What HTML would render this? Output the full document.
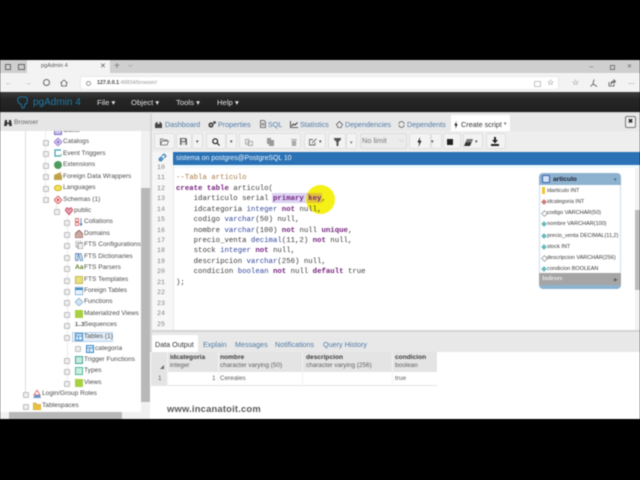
<!DOCTYPE html>
<html><head><meta charset="utf-8"><style>
html,body{margin:0;padding:0;background:#000;width:640px;height:480px;overflow:hidden}
#p{position:absolute;left:0;top:0;width:640px;height:480px;overflow:hidden;font-family:"Liberation Sans",sans-serif;filter:blur(.4px)}
#p div,#p svg{position:absolute;white-space:pre}
.t{font-size:6.55px;color:#4c4c4c;line-height:10px;letter-spacing:.02px}
.l{font-size:7.2px;color:#4f7ba6;line-height:10px}
.n{font-size:7.7px;color:#e2e2e2;line-height:10px}
.c{font-family:"Liberation Mono",monospace;font-size:7.35px;line-height:10px;color:#3c3c3c;left:176px}
.g{font-family:"Liberation Mono",monospace;font-size:6.6px;line-height:10px;color:#808080;left:157px}
.c b{font-weight:bold;color:#76247f}.c i{font-style:normal;color:#32479c}
.b{background:#f3f3f3;border:1px solid #e0e0e0;border-radius:2px;box-sizing:border-box;height:16px;top:133px}
.e{font-size:5.5px;color:#3a3a3a;line-height:8px;left:547px}
.h{font-size:6.6px;color:#3c3c3c;line-height:8px;font-weight:bold}
.s{font-size:6.4px;color:#606060;line-height:8px}
.x{width:4px;height:4px;border:1px solid #bcbcbc;background:#efefef;border-radius:1px;margin:0 0 0 -1px}
.ic{width:8px;height:8px}
.q{color:#444;font-size:5px;line-height:6px}
</style></head><body><div id="p">
<div style="left:0;top:60px;width:640px;height:13px;background:#cfcfcf"></div>
<div style="left:27px;top:60px;width:83px;height:13px;background:#f3f3f3"></div>
<div style="left:5px;top:64px;width:4px;height:4px;border:1px solid #666"></div>
<div style="left:18px;top:64px;width:5px;height:4px;border:1px solid #666"></div>
<div style="left:41px;top:63px;font-size:5.6px;line-height:7px;color:#555">pgAdmin 4</div>
<div style="left:100px;top:62px;font-size:7px;line-height:9px;color:#555">✕</div>
<div style="left:114px;top:61px;font-size:10px;line-height:11px;color:#777">+</div>
<div style="left:128px;top:63px;font-size:6px;line-height:7px;color:#777">⌵</div>
<div style="left:589px;top:61px;font-size:8px;line-height:11px;color:#777">–</div>
<div style="left:610px;top:65px;width:3px;height:3px;border:1px solid #777"></div>
<div style="left:627px;top:63px;font-size:6px;line-height:8px;color:#666">✕</div>
<div style="left:0;top:73px;width:640px;height:19px;background:#f3f3f3"></div>
<div style="left:5px;top:78px;font-size:8px;line-height:10px;color:#b5b5b5">←</div>
<div style="left:24px;top:78px;font-size:8px;line-height:10px;color:#b5b5b5">→</div>
<div style="left:43px;top:79px;width:5px;height:5px;border:1px solid #666;border-radius:50%"></div>
<svg style="left:60px;top:79px" width="8" height="8" viewBox="0 0 8 8" fill="none" stroke="#555" stroke-width=".8"><path d="M.5 4L4 1l3.5 3M1.5 3.5V7h5V3.500"/></svg>
<div style="left:80px;top:76px;width:479px;height:14px;background:#fff;border:1px solid #e8e8e8;box-sizing:border-box"></div>
<div style="left:86px;top:81px;width:3px;height:3px;border:1px solid #999;border-radius:50%"></div>
<div style="left:97px;top:80px;font-size:5.3px;line-height:7px;color:#999"><span style="color:#444;font-weight:bold">127.0.0.1</span>:49834/browser/</div>
<div style="left:534px;top:81px;width:5px;height:4px;border:1px solid #c4c4c4"></div>
<div style="left:547px;top:78px;font-size:8px;line-height:10px;color:#444">☆</div>
<div style="left:572px;top:78px;font-size:8px;line-height:10px;color:#555">☆</div>
<svg style="left:590px;top:79px" width="8" height="8" viewBox="0 0 8 8" fill="none" stroke="#555" stroke-width=".8"><path d="M4 .5L3 5 .5 7.500M3 5l4 2.500"/></svg>
<svg style="left:608px;top:79px" width="8" height="8" viewBox="0 0 8 8" fill="none" stroke="#555" stroke-width=".8"><path d="M1 3v4h5V5M3 5c0-2 1-3 3-3V.8L7.500 2.500 6 4V3C5 3 4 3.500 3 5Z"/></svg>
<div style="left:628px;top:78px;font-size:7px;line-height:9px;color:#555">…</div>
<div style="left:0;top:92px;width:640px;height:20px;background:linear-gradient(#3c3c3c,#262626 35%,#1f1f1f)"></div>
<svg style="left:16px;top:96px" width="13" height="13" viewBox="0 0 13 13" fill="none" stroke="#1f6f98" stroke-width="1.100"><path d="M2 2C4 .5 9 .5 11 2C12 5 11 8 9 8L8 12H6L5 8C3 8 1 5 2 2Z"/></svg>
<div style="left:33px;top:96px;font-size:10px;line-height:13px;color:#1f7ba8">pgAdmin 4</div>
<div class="n" style="left:97px;top:98px">File ▾</div>
<div class="n" style="left:131px;top:98px">Object ▾</div>
<div class="n" style="left:176px;top:98px">Tools ▾</div>
<div class="n" style="left:217px;top:98px">Help ▾</div>
<div style="left:0;top:112px;width:640px;height:307px;background:#e8e8e8"></div>
<div style="left:0;top:112px;width:640px;height:1px;background:#cfcfcf"></div>
<div style="left:0;top:131px;width:141px;height:281px;background:#fff"></div>
<div style="left:141px;top:131px;width:9px;height:281px;background:#f1f1f1"></div>
<div style="left:141px;top:188px;width:9px;height:214px;background:#b8b8b8"></div>
<div style="left:0;top:412px;width:150px;height:7px;background:#f1f1f1"></div>
<div style="left:9px;top:412px;width:113px;height:7px;background:#b8b8b8"></div>
<div style="left:150px;top:112px;width:2px;height:307px;background:#d8d8d8"></div>
<div style="left:25px;top:131px;width:1px;height:266px;background:#dfdfdf"></div>
<div style="left:45px;top:131px;width:1px;height:66px;background:#ececec"></div>
<div style="left:56px;top:205px;width:1px;height:5px;background:#e4e4e4"></div>
<div style="left:67px;top:216px;width:1px;height:165px;background:#ececec"></div>

<div class="x" style="left:44px;top:140px"></div><div class="x" style="left:44px;top:151px"></div><div class="x" style="left:44px;top:163px"></div><div class="x" style="left:44px;top:174px"></div><div class="x" style="left:44px;top:186px"></div><div class="x" style="left:44px;top:197px"></div>
<div class="x" style="left:55px;top:209px"></div>
<div class="x" style="left:65px;top:220px"></div><div class="x" style="left:65px;top:232px"></div><div class="x" style="left:65px;top:243px"></div><div class="x" style="left:65px;top:255px"></div><div class="x" style="left:65px;top:266px"></div><div class="x" style="left:65px;top:278px"></div><div class="x" style="left:65px;top:289px"></div><div class="x" style="left:65px;top:300px"></div><div class="x" style="left:65px;top:312px"></div><div class="x" style="left:65px;top:323px"></div><div class="x" style="left:65px;top:335px"></div><div class="x" style="left:76px;top:346px"></div><div class="x" style="left:65px;top:358px"></div><div class="x" style="left:65px;top:369px"></div><div class="x" style="left:65px;top:381px"></div>
<div class="x" style="left:24px;top:392px"></div><div class="x" style="left:24px;top:404px"></div>

<div class="ic" style="left:54px;top:127px;background:#c9c4ea;border:1px solid #7a6fc0;box-sizing:border-box"></div>
<svg class="ic" style="left:54px;top:138px" viewBox="0 0 8 8"><path d="M4 0L8 4 4 8 0 4Z" fill="#dcd2f3" stroke="#8a6fc9" stroke-width=".8"/><circle cx="4" cy="4" r="1.300" fill="#8a6fc9"/></svg>
<svg class="ic" style="left:54px;top:149px" viewBox="0 0 8 8" fill="none"><path d="M7 1H1V7H7" stroke="#3aa0b0" stroke-width="1.200"/><path d="M5 7.500L8 5" stroke="#7b8" stroke-width="1"/></svg>
<div class="ic" style="left:54px;top:161px;background:#4f9a5f;border-radius:50%"></div>
<svg class="ic" style="left:54px;top:172px" viewBox="0 0 8 8"><path d="M0 3L7 0V3H8V8H0Z" fill="#bfa24a"/></svg>
<div style="left:54px;top:185px;width:8px;height:6px;background:#f3e35a;border:.6px solid #c9b020;box-sizing:border-box;border-radius:3px"></div>
<svg class="ic" style="left:54px;top:196px" viewBox="0 0 8 8"><path d="M4 0L8 4 4 8 0 4Z" fill="#f6dcd8" stroke="#c44" stroke-width=".8"/><circle cx="4" cy="4" r="1.200" fill="#c44"/></svg>
<svg class="ic" style="left:65px;top:207px" viewBox="0 0 8 8"><path d="M4 8L0 3 2 .5 4 2 6 .5 8 3Z" fill="#e39aaa" stroke="#b23" stroke-width=".6"/></svg>
<svg class="ic" style="left:75px;top:218px" viewBox="0 0 8 8" fill="none"><rect x=".5" y=".5" width="3" height="3" stroke="#c55" stroke-width=".8"/><rect x=".5" y="4.500" width="3" height="3" stroke="#c55" stroke-width=".8"/><path d="M6 0V7M4.800 5.500L6 7.500 7.200 5.500" stroke="#57a" stroke-width=".8"/></svg>
<svg class="ic" style="left:75px;top:230px" viewBox="0 0 8 8"><path d="M4 0L8 4V8H0V4Z" fill="#c9a9a0" stroke="#844" stroke-width=".7"/></svg>
<svg class="ic" style="left:75px;top:241px" viewBox="0 0 8 8"><rect x="1" y="0" width="5" height="6" fill="#f5f5f5" stroke="#999" stroke-width=".7"/><rect x="3" y="2" width="5" height="6" fill="#eee" stroke="#777" stroke-width=".7"/></svg>
<svg class="ic" style="left:75px;top:253px" viewBox="0 0 8 8"><path d="M.5 .5H3V7.500H.5ZM3.500 1L6 .5 8 7.500 5.500 8Z" fill="#d5e5f5" stroke="#47a" stroke-width=".7"/></svg>
<div style="left:75px;top:263px;font-size:6.6px;line-height:10px;color:#5a7a20;font-weight:bold">Aa</div>
<div class="ic" style="left:75px;top:276px;background:#e8e080;border:.6px solid #c4bb50;box-sizing:border-box"></div>
<svg class="ic" style="left:75px;top:287px" viewBox="0 0 8 8"><rect width="8" height="8" fill="#e6f1fa" stroke="#3c87c0"/><path d="M0 2H8" stroke="#3c87c0" stroke-width="2"/></svg>
<svg class="ic" style="left:75px;top:298px" viewBox="0 0 8 8"><path d="M4 0L8 4 4 8 0 4Z" fill="#cfe3f2" stroke="#7aa8c8" stroke-width=".7"/></svg>
<div class="ic" style="left:75px;top:310px;background:#a8d040"></div>
<div style="left:75px;top:320px;font-size:5.6px;line-height:10px;color:#445;font-weight:bold">1..3</div>
<div style="left:72px;top:332px;width:41px;height:10px;background:#e3effa;border:1px solid #bcd3ea;box-sizing:border-box"></div>
<svg class="ic" style="left:75px;top:333px" viewBox="0 0 8 8"><rect x=".5" y=".5" width="7" height="7" fill="#dbeafa" stroke="#3c87c0"/><path d="M.5 3H8M3.500 3V8" stroke="#3c87c0" stroke-width=".7"/></svg>
<svg class="ic" style="left:86px;top:345px" viewBox="0 0 8 8"><rect x=".5" y=".5" width="7" height="7" fill="#dbeafa" stroke="#3c87c0"/><path d="M.5 3H8M3.500 3V8" stroke="#3c87c0" stroke-width=".7"/></svg>
<div class="ic" style="left:75px;top:356px;background:#c8e8e0;border:1px solid #4a9;box-sizing:border-box"></div>
<div class="ic" style="left:75px;top:367px;background:#c8f0e0;border:1px solid #5b9;box-sizing:border-box"></div>
<div class="ic" style="left:75px;top:379px;background:#a8d040"></div>
<svg class="ic" style="left:33px;top:390px" viewBox="0 0 8 8"><path d="M4 0L7 5H1Z" fill="none" stroke="#d66" stroke-width=".9"/><path d="M0 8L2 5H7L8 8Z" fill="#6a96c8"/></svg>
<svg class="ic" style="left:33px;top:402px" viewBox="0 0 8 8"><path d="M0 1H3L4 2.500H8V8H0Z" fill="#e8c040" stroke="#b8922a" stroke-width=".5"/></svg>

<div class="t" style="left:63px;top:126px">Casts</div>
<div class="t" style="left:63px;top:137px">Catalogs</div>
<div class="t" style="left:63px;top:149px">Event Triggers</div>
<div class="t" style="left:63px;top:160px">Extensions</div>
<div class="t" style="left:63px;top:172px">Foreign Data Wrappers</div>
<div class="t" style="left:63px;top:183px">Languages</div>
<div class="t" style="left:63px;top:195px">Schemas (1)</div>
<div class="t" style="left:74px;top:206px">public</div>
<div class="t" style="left:84px;top:217px">Collations</div>
<div class="t" style="left:84px;top:229px">Domains</div>
<div class="t" style="left:84px;top:240px">FTS Configurations</div>
<div class="t" style="left:84px;top:252px">FTS Dictionaries</div>
<div class="t" style="left:84px;top:263px">FTS Parsers</div>
<div class="t" style="left:84px;top:275px">FTS Templates</div>
<div class="t" style="left:84px;top:286px">Foreign Tables</div>
<div class="t" style="left:84px;top:297px">Functions</div>
<div class="t" style="left:84px;top:309px">Materialized Views</div>
<div class="t" style="left:84px;top:320px">Sequences</div>
<div class="t" style="left:84px;top:332px">Tables (1)</div>
<div class="t" style="left:95px;top:344px">categoria</div>
<div class="t" style="left:84px;top:355px">Trigger Functions</div>
<div class="t" style="left:84px;top:366px">Types</div>
<div class="t" style="left:84px;top:378px">Views</div>
<div class="t" style="left:42px;top:389px">Login/Group Roles</div>
<div class="t" style="left:42px;top:401px">Tablespaces</div>
<div style="left:0;top:113px;width:150px;height:18px;background:#e6e6e6"></div>
<svg style="left:4px;top:119px" width="8" height="8" viewBox="0 0 8 8"><path d="M1 1H3V3.500H5V1H7L8 7H5V5H3V7H0Z" fill="#333"/></svg>
<div style="left:14px;top:118px;font-size:6.6px;line-height:10px;color:#666">Browser</div>

<div style="left:451px;top:115px;width:59px;height:16px;background:#fff"></div>
<svg style="left:155px;top:122px" width="7" height="6" viewBox="0 0 7 6"><path d="M0 2L1.500 0H2.500V2H4.500V0H5.500L7 2V6H0Z" fill="#444"/></svg><div class="l" style="left:165px;top:120px">Dashboard</div>
<svg style="left:208px;top:121px" width="8" height="7" viewBox="0 0 8 7" fill="#444"><circle cx="3" cy="4" r="2.600"/><circle cx="6.500" cy="1.500" r="1.400"/><circle cx="3" cy="4" r=".9" fill="#e8e8e8"/></svg><div class="l" style="left:218px;top:120px">Properties</div>
<svg style="left:260px;top:120px" width="6" height="8" viewBox="0 0 6 8" fill="none" stroke="#555" stroke-width=".8"><path d="M.5 .5H4L5.500 2V7.500H.5ZM1.500 3.500H4.500M1.500 5H4.500"/></svg><div class="l" style="left:268px;top:120px">SQL</div>
<svg style="left:290px;top:121px" width="8" height="7" viewBox="0 0 8 7" fill="none" stroke="#333"><path d="M.5 0V6.500H8" stroke-width=".8"/><path d="M1.500 5L3.500 3 5 4 7.500 1.500" stroke-width="1"/></svg><div class="l" style="left:300px;top:120px">Statistics</div>
<svg style="left:336px;top:121px" width="7" height="7" viewBox="0 0 7 7" fill="none" stroke="#555" stroke-width=".8"><path d="M3.500 .5L6.500 3.500 5 6.500H2L.5 3.500Z"/></svg><div class="l" style="left:345px;top:120px">Dependencies</div>
<svg style="left:398px;top:121px" width="7" height="7" viewBox="0 0 7 7" fill="none" stroke="#555" stroke-width=".8"><path d="M1 3A2.500 2.500 0 0 1 6 3M6 4A2.500 2.500 0 0 1 1 4"/></svg><div class="l" style="left:407px;top:120px">Dependents</div>
<svg style="left:454px;top:121px" width="4" height="8" viewBox="0 0 4 8"><path d="M2.500 0L.3 4.500H1.800L1.300 8 3.700 3H2.200Z" fill="#222"/></svg><div style="left:461px;top:120px;font-size:7.2px;line-height:10px;color:#333">Create script *</div>
<div style="left:625px;top:116px;width:11px;height:12px;background:#eee;border:1px solid #777;border-radius:2px;box-sizing:border-box;font-size:6px;line-height:10px;text-align:center;color:#222;font-weight:bold">✖</div>

<div style="left:152px;top:131px;width:488px;height:21px;background:#eeeeee"></div>
<div class="b" style="left:154px;width:21px"></div>
<div class="b" style="left:176px;width:16px"></div><div class="b" style="left:192px;width:11px"></div>
<div class="b" style="left:206px;width:20px"></div><div class="b" style="left:226px;width:11px"></div>
<div class="b" style="left:239px;width:62px"></div>
<div class="b" style="left:304px;width:22px"></div>
<div class="b" style="left:328px;width:18px"></div><div class="b" style="left:346px;width:11px"></div>
<div class="b" style="left:360px;width:47px;background:#ececec;border-color:#dcdcdc"></div>
<div class="b" style="left:409px;width:22px"></div><div class="b" style="left:431px;width:11px"></div>
<div class="b" style="left:443px;width:18px"></div>
<div class="b" style="left:463px;width:20px"></div>
<div class="b" style="left:486px;width:20px"></div>
<svg style="left:160px;top:138px" width="9" height="8" viewBox="0 0 9 8" fill="none" stroke="#666" stroke-width=".8"><path d="M.5 7V1H3L4 2H7V3M.5 7L2 3H8.500L7 7Z"/></svg>
<svg style="left:180px;top:138px" width="7" height="7" viewBox="0 0 7 7"><path d="M0 0H6L7 1V7H0Z" fill="#666"/><rect x="1.500" y="1" width="3.500" height="2" fill="#eee"/><rect x="1.500" y="4" width="4" height="3" fill="#ddd"/></svg>
<div class="q" style="left:196px;top:139px">▾</div><div class="q" style="left:230px;top:139px">▾</div>
<svg style="left:212px;top:138px" width="8" height="8" viewBox="0 0 8 8" fill="none" stroke="#222" stroke-width="1.200"><circle cx="3.200" cy="3.200" r="2.400"/><path d="M5 5L7.500 7.500"/></svg>
<svg style="left:245px;top:138px" width="8" height="8" viewBox="0 0 8 8" fill="none" stroke="#a8a8a8" stroke-width=".9"><path d="M.5 1.500H4V6H.5ZM3 3.500H7.500V7.500H3Z"/></svg>
<svg style="left:267px;top:138px" width="7" height="8" viewBox="0 0 7 8"><path d="M0 0H4V2H7V8H2V6H0Z" fill="#9a9a9a"/></svg>
<svg style="left:291px;top:138px" width="6" height="8" viewBox="0 0 6 8"><path d="M0 1H6V2H0ZM.8 2.500H5.200V8H.8Z" fill="#aaa"/></svg>
<svg style="left:309px;top:138px" width="8" height="8" viewBox="0 0 8 8" fill="none" stroke="#666" stroke-width=".9"><path d="M6 4.500V7H.5V1.500H4M3 5L7.500 .8"/></svg>
<div class="q" style="left:319px;top:139px">▾</div>
<svg style="left:334px;top:138px" width="7" height="8" viewBox="0 0 7 8"><path d="M0 0H7V1.500L4.500 4V8H2.500V4L0 1.500Z" fill="#555"/></svg>
<div class="q" style="left:350px;top:140px;color:#777">▾</div>
<div style="left:362px;top:136px;font-size:7.4px;line-height:10px;color:#777">No limit</div>
<div style="left:399px;top:137px;font-size:6px;line-height:8px;color:#aaa">⌵</div>
<svg style="left:417px;top:137px" width="5" height="10" viewBox="0 0 5 10"><path d="M3 0L.5 5.500H2.200L1.500 10 4.500 3.800H2.700Z" fill="#222"/></svg>
<div class="q" style="left:431px;top:139px">▾</div>
<div style="left:447px;top:139px;width:6px;height:6px;background:#222"></div>
<svg style="left:464px;top:139px" width="9" height="7" viewBox="0 0 9 7"><path d="M3 0H9L6 7H0Z" fill="#333"/><path d="M3 0H9L7.500 3.500H1.500Z" fill="#777"/></svg>
<div class="q" style="left:475px;top:139px">▾</div>
<svg style="left:491px;top:137px" width="8" height="9" viewBox="0 0 8 9"><path d="M3 0H5V3H7L4 6.500 1 3H3ZM0 7H8V9H0Z" fill="#222"/></svg>

<div style="left:173px;top:152px;width:467px;height:13px;background:#2a72b5"></div>
<div style="left:152px;top:152px;width:21px;height:13px;background:#f5f5f5"></div>
<svg style="left:158px;top:153px" width="9" height="9" viewBox="0 0 9 9" fill="none" stroke="#2b74b5" stroke-width="1"><path d="M1 8L3.500 5.500M4 3L6 1 8 3 6 5M3 4L5 6 3 8 1 6Z"/></svg>
<div style="left:176px;top:154px;font-size:6.9px;line-height:10px;color:#eef5fc">sistema on postgres@PostgreSQL 10</div>
<div style="left:173px;top:165px;width:467px;height:165px;background:#fff"></div>
<div style="left:173px;top:165px;width:467px;height:3px;background:#ecf9fd"></div>
<div style="left:152px;top:165px;width:22px;height:165px;background:#f7f7f7;border-right:1px solid #e6e6e6;box-sizing:border-box"></div>
<div class="g" style="top:163px">10</div><div class="g" style="top:173px">11</div><div class="g" style="top:184px">12</div><div class="g" style="top:194px">13</div><div class="g" style="top:205px">14</div><div class="g" style="top:215px">15</div><div class="g" style="top:226px">16</div><div class="g" style="top:236px">17</div><div class="g" style="top:246px">18</div><div class="g" style="top:257px">19</div><div class="g" style="top:267px">20</div><div class="g" style="top:278px">21</div><div class="g" style="top:288px">22</div><div class="g" style="top:299px">23</div><div class="g" style="top:309px">24</div><div class="g" style="top:320px">25</div>
<div style="left:272px;top:193px;width:50px;height:10px;background:#dcd3f2"></div>
<div style="left:306px;top:185px;width:29px;height:29px;background:#f5f015;border-radius:50%"></div>
<div style="left:307px;top:193px;width:15px;height:10px;background:#e2c43a"></div>
<div class="c" style="top:173px;color:#a87b45">--Tabla articulo</div>
<div class="c" style="top:184px"><b>create table</b> articulo(</div>
<div class="c" style="top:194px">    idarticulo serial <b>primary key</b>,</div>
<div class="c" style="top:205px">    idcategoria <i>integer</i> <b>not</b> null,</div>
<div class="c" style="top:215px">    codigo <i>varchar</i>(50) null,</div>
<div class="c" style="top:226px">    nombre <i>varchar</i>(100) <b>not</b> null <b>unique</b>,</div>
<div class="c" style="top:236px">    precio_venta <i>decimal</i>(11,2) <b>not</b> null,</div>
<div class="c" style="top:246px">    stock <i>integer</i> <b>not</b> null,</div>
<div class="c" style="top:257px">    descripcion <i>varchar</i>(256) null,</div>
<div class="c" style="top:267px">    condicion <i>boolean</i> <b>not</b> null <b>default</b> true</div>
<div class="c" style="top:278px">);</div>

<div style="left:635px;top:168px;width:5px;height:162px;background:#f3f3f3"></div>
<div style="left:635px;top:210px;width:5px;height:80px;background:#bdbdbd"></div>
<div style="left:539px;top:173px;width:82px;height:12px;background:#8db2cf;border-radius:4px 4px 0 0"></div>
<svg style="left:542px;top:175px" width="8" height="8" viewBox="0 0 8 8"><rect x=".5" y=".5" width="7" height="7" rx="1" fill="#cfe0f5" stroke="#3a5fb0"/></svg>
<div style="left:553px;top:175px;font-size:6.6px;line-height:9px;font-weight:bold;color:#223">articulo</div>
<div style="left:613px;top:176px;font-size:4.500px;line-height:7px;color:#567">▼</div>
<div style="left:539px;top:185px;width:82px;height:88px;background:#fff;border-left:1px solid #cde;border-right:1px solid #cde;box-sizing:border-box"></div>
<div style="left:539px;top:273px;width:82px;height:12px;background:#a5a5a5"></div>
<div style="left:539px;top:285px;width:82px;height:4px;background:#8db2cf;border-radius:0 0 4px 4px"></div>
<div style="left:542px;top:275px;font-family:'Liberation Serif',serif;font-size:6.2px;line-height:8px;color:#eaeaea;font-weight:bold">Indexes</div>
<div style="left:614px;top:276px;font-size:4.500px;line-height:7px;color:#555">▶</div>
<div style="left:542px;top:187px;width:3px;height:7px;background:#f0c830"></div>
<div style="left:542px;top:200px;width:4px;height:4px;background:#c77;transform:rotate(45deg)"></div>
<div style="left:542px;top:211px;width:3px;height:3px;border:1px solid #aaa;transform:rotate(45deg)"></div>
<div style="left:542px;top:222px;width:4px;height:4px;background:#6bb;transform:rotate(45deg)"></div>
<div style="left:542px;top:234px;width:4px;height:4px;background:#6bb;transform:rotate(45deg)"></div>
<div style="left:542px;top:245px;width:4px;height:4px;background:#6bb;transform:rotate(45deg)"></div>
<div style="left:542px;top:256px;width:3px;height:3px;border:1px solid #aaa;transform:rotate(45deg)"></div>
<div style="left:542px;top:267px;width:4px;height:4px;background:#6bb;transform:rotate(45deg)"></div>
<div class="e" style="top:187px">idarticulo INT</div>
<div class="e" style="top:198px">idcategoria INT</div>
<div class="e" style="top:209px">codigo VARCHAR(50)</div>
<div class="e" style="top:220px">nombre VARCHAR(100)</div>
<div class="e" style="top:232px">precio_venta DECIMAL(11,2)</div>
<div class="e" style="top:243px">stock INT</div>
<div class="e" style="top:254px">descripcion VARCHAR(256)</div>
<div class="e" style="top:265px">condicion BOOLEAN</div>

<div style="left:152px;top:330px;width:488px;height:2px;background:#d4d4d4"></div>
<div style="left:152px;top:332px;width:488px;height:20px;background:#e8e8e8"></div>
<div style="left:152px;top:335px;width:46px;height:17px;background:#fff"></div>
<div style="left:155px;top:340px;font-size:7.2px;line-height:10px;color:#333">Data Output</div>
<div class="l" style="left:203px;top:340px">Explain</div>
<div class="l" style="left:235px;top:340px">Messages</div>
<div class="l" style="left:275px;top:340px">Notifications</div>
<div class="l" style="left:323px;top:340px">Query History</div>
<div style="left:150px;top:352px;width:490px;height:67px;background:#fff"></div>
<div style="left:151px;top:352px;width:286px;height:34px;background:#e4e4e4"></div>
<div style="left:167px;top:372px;width:270px;height:13px;background:#fff"></div>
<div style="left:218px;top:352px;width:1px;height:34px;background:#f4f4f4"></div>
<div style="left:302px;top:352px;width:1px;height:34px;background:#f4f4f4"></div>
<div style="left:392px;top:352px;width:1px;height:34px;background:#f4f4f4"></div>
<div style="left:167px;top:352px;width:1px;height:34px;background:#f4f4f4"></div>
<div style="left:160px;top:365px;width:0;height:0;border-left:4px solid transparent;border-bottom:4px solid #666"></div>
<div class="h" style="left:170px;top:354px">idcategoria</div><div class="s" style="left:170px;top:362px">integer</div>
<div class="h" style="left:220px;top:354px">nombre</div><div class="s" style="left:220px;top:362px">character varying (50)</div>
<div class="h" style="left:306px;top:354px">descripcion</div><div class="s" style="left:306px;top:362px">character varying (256)</div>
<div class="h" style="left:395px;top:354px">condicion</div><div class="s" style="left:395px;top:362px">boolean</div>
<div class="s" style="left:158px;top:375px">1</div>
<div class="s" style="left:212px;top:375px">1</div>
<div class="s" style="left:220px;top:375px">Cereales</div>
<div class="s" style="left:395px;top:375px">true</div>
<div style="left:167px;top:403px;font-size:9.4px;line-height:12px;font-weight:bold;color:#5a5a5a;letter-spacing:.2px">www.incanatoit.com</div>
<div style="left:0;top:419px;width:640px;height:61px;background:#000"></div>
</div></body></html>
